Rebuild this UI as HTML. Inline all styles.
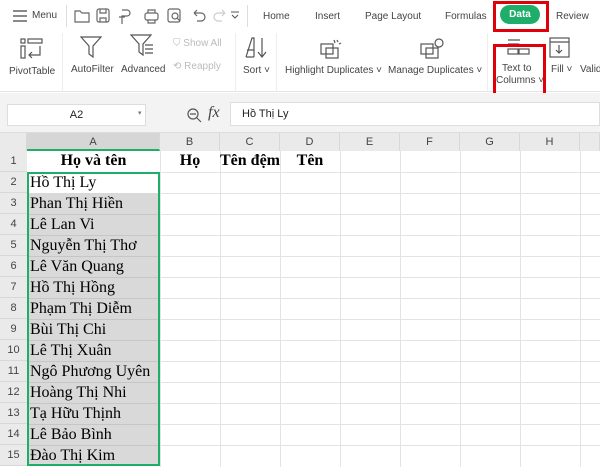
<!DOCTYPE html><html><head><meta charset="utf-8"><style>
*{margin:0;padding:0;box-sizing:border-box}
body{width:600px;height:467px;overflow:hidden;background:#fff;font-family:"Liberation Sans",sans-serif;position:relative;color:#333}
.a{position:absolute}
.t{font-size:10px;color:#444;white-space:nowrap}
.g{color:#bbb}
.cell{position:absolute;font-family:"Liberation Serif",serif;font-size:16px;color:#000;white-space:nowrap}
.rh{position:absolute;left:0;width:27px;text-align:center;font-size:11px;color:#444;background:#eaeaea;height:21px;line-height:21px;border-bottom:1px solid #d8d8d8}
.ch{position:absolute;top:133px;height:18px;line-height:18px;text-align:center;font-size:11px;color:#444;background:#eaeaea;border-right:1px solid #d8d8d8}
</style></head><body>
<!-- top bar -->
<div class="a" style="left:0;top:0;width:600px;height:92px;background:#fff;border-bottom:1px solid #e4e4e4"></div>
<svg class="a" style="left:12px;top:9px" width="16" height="14"><path d="M1 2h14M1 7h14M1 12h14" stroke="#444" stroke-width="1.3"/></svg>
<div class="a t" style="left:32px;top:10px;font-size:10px">Menu</div>
<div class="a" style="left:66px;top:5px;width:1px;height:22px;background:#ddd"></div>
<svg class="a" style="left:74px;top:7px" width="170" height="18" fill="none" stroke="#666" stroke-width="1.2">
<path d="M1 4h5l2 2h7v9H1z"/><rect x="23" y="2" width="12" height="13" rx="2"/><path d="M26 2v4h6V2M26 15v-4h6v4"/>
<path d="M48 3h5a3 3 0 010 6h-5v8M45 10h6"/><rect x="71" y="6" width="13" height="7" rx="2"/><path d="M74 6V3h7v3M74 13v3h7v-3"/>
<rect x="94" y="2" width="12" height="13" rx="2"/><circle cx="101" cy="9" r="3"/><path d="M103 11l3 3"/>
<path d="M120 6h7a4 4 0 010 8h-4M120 6l3-3M120 6l3 3"/><path stroke="#ccc" d="M151 6h-7a4 4 0 000 8h4M151 6l-3-3M151 6l-3 3"/>
</svg>
<svg class="a" style="left:230px;top:11px" width="10" height="8" fill="none" stroke="#555"><path d="M1 1h8M2 4l3 3 3-3"/></svg>
<div class="a" style="left:247px;top:5px;width:1px;height:22px;background:#ddd"></div>
<div class="a t" style="left:263px;top:11px">Home</div>
<div class="a t" style="left:315px;top:11px">Insert</div>
<div class="a t" style="left:365px;top:11px">Page Layout</div>
<div class="a t" style="left:445px;top:11px">Formulas</div>
<div class="a" style="left:500px;top:5px;width:40px;height:19px;background:#1fae6a;border-radius:10px;color:#fff;font-size:10px;font-weight:bold;text-align:center;line-height:19px">Data</div>
<div class="a" style="left:493px;top:1px;width:56px;height:31px;border:3px solid #e0000a"></div>
<div class="a t" style="left:556px;top:11px">Review</div>
<!-- ribbon -->
<svg class="a" style="left:20px;top:38px" width="24" height="22" fill="none" stroke="#555" stroke-width="1.2"><rect x="1" y="1" width="4" height="4"/><rect x="8" y="1" width="14" height="4"/><rect x="1" y="8" width="4" height="12"/><path d="M20 8v9H9M12 14l-3 3 3 3"/></svg>
<div class="a t" style="left:9px;top:66px">PivotTable</div>
<div class="a" style="left:62px;top:33px;width:1px;height:58px;background:#eee"></div>
<svg class="a" style="left:80px;top:36px" width="22" height="22" fill="none" stroke="#555" stroke-width="1.2"><path d="M1 1h20l-8 9v11l-4-3V10z"/></svg>
<div class="a t" style="left:71px;top:64px">AutoFilter</div>
<svg class="a" style="left:130px;top:34px" width="24" height="24" fill="none" stroke="#555" stroke-width="1.2"><path d="M1 1h20l-8 9v11l-4-3V10zM15 11h8M15 15h8M15 19h8"/></svg>
<div class="a t" style="left:121px;top:64px">Advanced</div>
<div class="a t g" style="left:173px;top:38px">⛉ Show All</div>
<div class="a t g" style="left:173px;top:61px">⟲ Reapply</div>
<div class="a" style="left:235px;top:33px;width:1px;height:58px;background:#eee"></div>
<svg class="a" style="left:244px;top:36px" width="24" height="24" fill="none" stroke="#555" stroke-width="1.2"><path d="M2 21L8 2h2v19M3 14h7M2 21h8M18 2v18M14 16l4 5 4-5"/></svg>
<div class="a t" style="left:243px;top:65px">Sort ˅</div>
<div class="a" style="left:276px;top:33px;width:1px;height:58px;background:#eee"></div>
<svg class="a" style="left:320px;top:38px" width="24" height="22" fill="none" stroke="#555" stroke-width="1.2"><rect x="1" y="6" width="12" height="10"/><rect x="6" y="10" width="12" height="10"/><path d="M17 2l1 2M21 5l-2 1M14 2l1 3"/></svg>
<div class="a t" style="left:285px;top:65px">Highlight Duplicates ˅</div>
<svg class="a" style="left:420px;top:38px" width="24" height="22" fill="none" stroke="#555" stroke-width="1.2"><rect x="1" y="6" width="12" height="10"/><rect x="6" y="10" width="12" height="10"/><circle cx="19" cy="5" r="4"/></svg>
<div class="a t" style="left:388px;top:65px">Manage Duplicates ˅</div>
<div class="a" style="left:487px;top:33px;width:1px;height:58px;background:#eee"></div>
<svg class="a" style="left:507px;top:38px" width="24" height="18" fill="none" stroke="#555" stroke-width="1.2"><path d="M1 2h12M1 6h10a3 3 0 013 3"/><rect x="1" y="11" width="10" height="5"/><rect x="12" y="11" width="10" height="5"/></svg>
<div class="a t" style="left:502px;top:63px">Text to</div>
<div class="a t" style="left:496px;top:75px">Columns ˅</div>
<div class="a" style="left:493px;top:44px;width:53px;height:70px;border:3px solid #e0000a"></div>
<svg class="a" style="left:549px;top:37px" width="22" height="22" fill="none" stroke="#555" stroke-width="1.2"><rect x="1" y="1" width="19" height="19"/><path d="M1 5h19M10 8v8M7 13l3 3 3-3"/></svg>
<div class="a t" style="left:551px;top:64px">Fill ˅</div>
<div class="a t" style="left:580px;top:64px">Valid</div>
<!-- formula bar -->
<div class="a" style="left:0;top:93px;width:600px;height:40px;background:#f3f3f3;border-bottom:1px solid #ddd"></div>
<div class="a" style="left:7px;top:104px;width:139px;height:22px;background:#fff;border:1px solid #ddd;font-size:11px;text-align:center;line-height:20px;color:#222">A2</div>
<div class="a" style="left:138px;top:109px;font-size:7px;color:#777">▾</div>
<svg class="a" style="left:186px;top:107px" width="16" height="16" fill="none" stroke="#555" stroke-width="1.2"><circle cx="7" cy="7" r="5"/><path d="M4 7h6M11 11l4 4"/></svg>
<div class="a" style="left:208px;top:104px;font-family:'Liberation Serif',serif;font-style:italic;font-size:16px;color:#444">fx</div>
<div class="a" style="left:230px;top:102px;width:370px;height:24px;background:#fff;border:1px solid #ddd;font-size:11px;line-height:22px;padding-left:11px;color:#222">Hồ Thị Ly</div>
<!-- grid -->
<div class="a" style="left:0;top:133px;width:27px;height:18px;background:#eaeaea;border-right:1px solid #d8d8d8"></div>
<div class="ch" style="left:27px;width:133px;background:#d6d6d6;border-bottom:2px solid #1fae6a">A</div>
<div class="ch" style="left:160px;width:60px">B</div>
<div class="ch" style="left:220px;width:60px">C</div>
<div class="ch" style="left:280px;width:60px">D</div>
<div class="ch" style="left:340px;width:60px">E</div>
<div class="ch" style="left:400px;width:60px">F</div>
<div class="ch" style="left:460px;width:60px">G</div>
<div class="ch" style="left:520px;width:60px">H</div>
<div class="ch" style="left:580px;width:20px"></div>
<svg class="a" style="left:0;top:151px" width="600" height="316">
<g stroke="#e2e2e8" stroke-width="1">
<path d="M160.5 0v316M220.5 0v316M280.5 0v316M340.5 0v316M400.5 0v316M460.5 0v316M520.5 0v316M580.5 0v316"/>
<path d="M27 21.5h573M27 42.5h573M27 63.5h573M27 84.5h573M27 105.5h573M27 126.5h573M27 147.5h573M27 168.5h573M27 189.5h573M27 210.5h573M27 231.5h573M27 252.5h573M27 273.5h573M27 294.5h573"/>
</g>
<rect x="28" y="42" width="132" height="273" fill="#d9d9d9"/>
<g stroke="#c6c6c6"><path d="M28 63.5h132M28 84.5h132M28 105.5h132M28 126.5h132M28 147.5h132M28 168.5h132M28 189.5h132M28 210.5h132M28 231.5h132M28 252.5h132M28 273.5h132M28 294.5h132"/></g>
<rect x="28" y="22" width="131" height="292" fill="none" stroke="#1fae6a" stroke-width="2"/>
</svg>
<div class="rh" style="top:151px">1</div><div class="rh" style="top:172px">2</div><div class="rh" style="top:193px">3</div><div class="rh" style="top:214px">4</div><div class="rh" style="top:235px">5</div><div class="rh" style="top:256px">6</div><div class="rh" style="top:277px">7</div><div class="rh" style="top:298px">8</div><div class="rh" style="top:319px">9</div><div class="rh" style="top:340px">10</div><div class="rh" style="top:361px">11</div><div class="rh" style="top:382px">12</div><div class="rh" style="top:403px">13</div><div class="rh" style="top:424px">14</div><div class="rh" style="top:445px">15</div>
<div class="cell" style="left:27px;width:133px;text-align:center;top:152px;font-weight:bold">Họ và tên</div>
<div class="cell" style="left:160px;width:60px;text-align:center;top:152px;font-weight:bold">Họ</div>
<div class="cell" style="left:220px;top:152px;font-weight:bold">Tên đệm</div>
<div class="cell" style="left:280px;width:60px;text-align:center;top:152px;font-weight:bold">Tên</div>
<div class="cell" style="left:30px;top:174px">Hồ Thị Ly</div>
<div class="cell" style="left:30px;top:195px">Phan Thị Hiền</div>
<div class="cell" style="left:30px;top:216px">Lê Lan Vi</div>
<div class="cell" style="left:30px;top:237px">Nguyễn Thị Thơ</div>
<div class="cell" style="left:30px;top:258px">Lê Văn Quang</div>
<div class="cell" style="left:30px;top:279px">Hồ Thị Hồng</div>
<div class="cell" style="left:30px;top:300px">Phạm Thị Diễm</div>
<div class="cell" style="left:30px;top:321px">Bùi Thị Chi</div>
<div class="cell" style="left:30px;top:342px">Lê Thị Xuân</div>
<div class="cell" style="left:30px;top:363px">Ngô Phương Uyên</div>
<div class="cell" style="left:30px;top:384px">Hoàng Thị Nhi</div>
<div class="cell" style="left:30px;top:405px">Tạ Hữu Thịnh</div>
<div class="cell" style="left:30px;top:426px">Lê Bảo Bình</div>
<div class="cell" style="left:30px;top:447px">Đào Thị Kim</div>
</body></html>
